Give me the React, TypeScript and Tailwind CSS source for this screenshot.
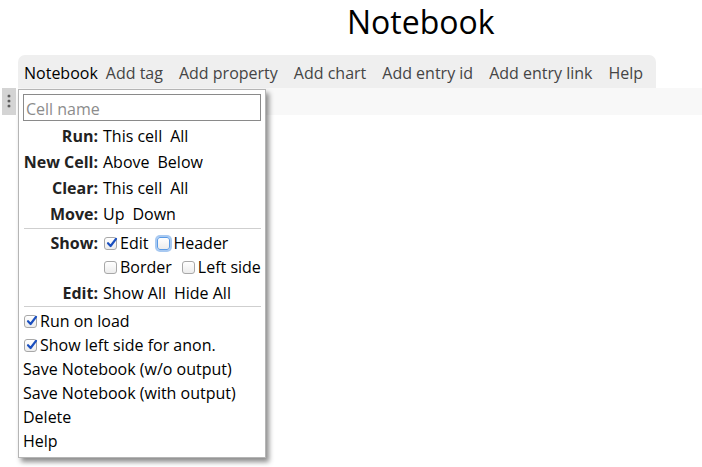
import React from 'react';

function Box({ checked, focused }: { checked?: boolean; focused?: boolean }) {
  return (
    <span
      className={`relative inline-flex h-[13px] w-[13px] shrink-0 items-center justify-center rounded-[3px] border bg-gradient-to-b from-white to-[#ececec] ${
        focused ? 'border-[#5b9be6] shadow-[0_0_0_2px_rgba(96,156,230,0.55)]' : 'border-[#a8a8a8]'
      }`}
    >
      {checked && (
        <svg viewBox="0 0 12 12" className="absolute left-[1px] top-[-1px] h-[12px] w-[12px]">
          <path d="M2 6.2 L4.6 9 L10 1.8" fill="none" stroke="#1a4fbf" strokeWidth="2.2" strokeLinecap="round" strokeLinejoin="round" />
        </svg>
      )}
    </span>
  );
}

function Check({ label, checked, focused }: { label: string; checked?: boolean; focused?: boolean }) {
  return (
    <span className="flex items-center gap-[3px]">
      <Box checked={checked} focused={focused} />
      {label}
    </span>
  );
}

const commands: [string, string[]][] = [
  ['Run:', ['This cell', 'All']],
  ['New Cell:', ['Above', 'Below']],
  ['Clear:', ['This cell', 'All']],
  ['Move:', ['Up', 'Down']],
];

const menuItems = ['Add tag', 'Add property', 'Add chart', 'Add entry id', 'Add entry link', 'Help'];

export default function App() {
  return (
    <div className="relative h-[467px] w-full overflow-hidden bg-white text-black" style={{ fontFamily: '"Open Sans", "DejaVu Sans", sans-serif' }}>
      {/* title */}
      <div className="h-[55px] pl-[347px] pt-[6px]">
        <h1 className="text-[32px] leading-[32px] font-normal">Notebook</h1>
      </div>

      {/* notebook menu bar */}
      <div className="ml-[18px] flex h-[33px] w-[638px] items-center whitespace-nowrap rounded-t-[7px] bg-[#efefef] pl-[6px] pt-[3px] text-[16px]">
        <span className="mr-[8px] shrink-0 text-black">Notebook</span>
        {menuItems.map((item) => (
          <span key={item} className="mr-[16px] shrink-0 text-[#454545]">
            {item}
          </span>
        ))}
      </div>

      {/* cell row */}
      <div className="flex h-[27px]">
        <div className="ml-[2px] flex h-[27px] w-[14px] flex-col items-center gap-[3px] bg-[#d4d4d4] pt-[7px]">
          <span className="h-[2px] w-[2px] rounded-full bg-[#555] shadow-[0_0_0_0.6px_#777]" />
          <span className="h-[2px] w-[2px] rounded-full bg-[#555] shadow-[0_0_0_0.6px_#777]" />
          <span className="h-[2px] w-[2px] rounded-full bg-[#555] shadow-[0_0_0_0.6px_#777]" />
        </div>
        <div className="ml-[2px] flex-1 bg-[#f8f8f8]" />
      </div>

      {/* cell popup menu */}
      <div className="absolute left-[18px] top-[89px] w-[248px] border border-[#b5b5b5] bg-white p-[4px] text-[16px] shadow-[3px_4px_5px_rgba(0,0,0,0.45)]">
        <div className="flex h-[27px] items-center border border-[#8a8a8a] px-[2px] pt-[2px] text-[#8c8c8c]">Cell name</div>

        <div className="mt-[2px] grid grid-cols-[75px_1fr] gap-x-[5px] leading-[26px]">
          {commands.map(([label, actions]) => (
            <React.Fragment key={label}>
              <span className="text-right font-bold text-[#222]">{label}</span>
              <span className="flex gap-[8px]">
                {actions.map((a) => (
                  <span key={a}>{a}</span>
                ))}
              </span>
            </React.Fragment>
          ))}
        </div>

        <div className="my-[1px] ml-[1px] border-t border-[#cfcfcf]" />

        <div className="grid grid-cols-[75px_1fr] gap-x-[5px]">
          <span className="py-[1px] text-right font-bold leading-[24px] text-[#222]">Show:</span>
          <div className="flex flex-col py-[1px] pl-[1px] leading-[24px]">
            <div className="flex h-[24px] items-center gap-[9px]">
              <Check label="Edit" checked />
              <Check label="Header" focused />
            </div>
            <div className="flex h-[24px] items-center gap-[10px]">
              <Check label="Border" />
              <Check label="Left side" />
            </div>
          </div>
          <span className="text-right font-bold leading-[26px] text-[#222]">Edit:</span>
          <span className="flex gap-[8px] leading-[26px]">
            <span>Show All</span>
            <span>Hide All</span>
          </span>
        </div>

        <div className="ml-[1px] border-t border-[#cfcfcf]" />

        <div className="flex flex-col pt-[2px] leading-[24px]">
          <div className="flex h-[24px] items-center pl-[1px]">
            <Check label="Run on load" checked />
          </div>
          <div className="flex h-[24px] items-center pl-[1px]">
            <Check label="Show left side for anon." checked />
          </div>
          <span>Save Notebook (w/o output)</span>
          <span>Save Notebook (with output)</span>
          <span>Delete</span>
          <span>Help</span>
        </div>
      </div>
    </div>
  );
}
